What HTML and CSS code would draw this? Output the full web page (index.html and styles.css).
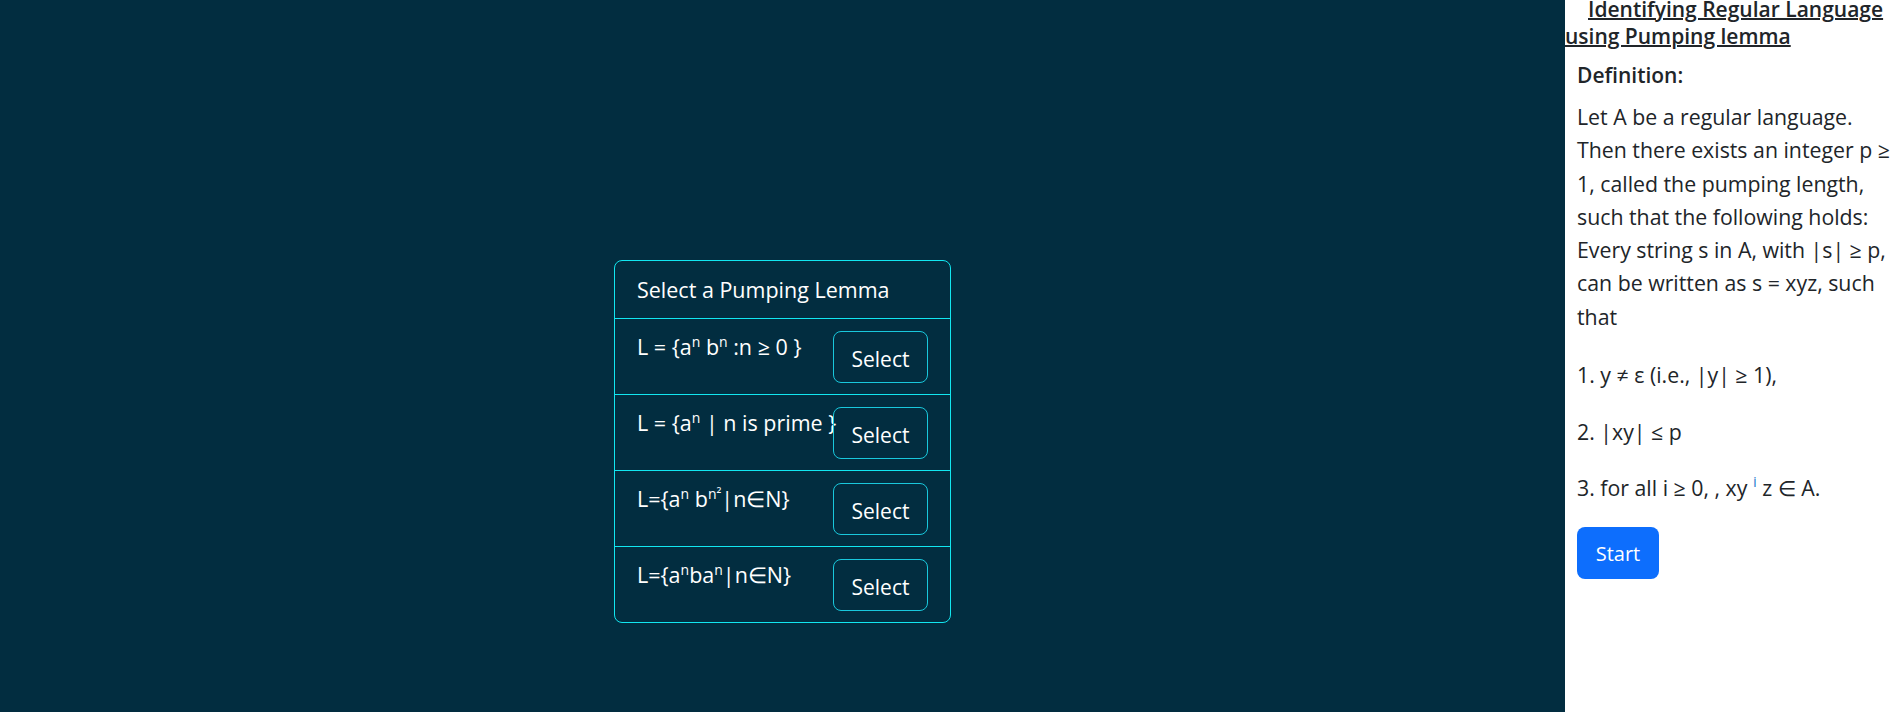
FILE: index.html
```html
<!DOCTYPE html>
<html lang="en">
<head>
<meta charset="utf-8">
<title>Pumping Lemma</title>
<link rel="stylesheet" href="styles.css">
</head>
<body>
<div class="layout">
  <main class="stage">
    <div class="card">
      <div class="card-header">Select a Pumping Lemma</div>
      <div class="row">
        <span class="lang">L = {a<sup>n</sup> b<sup>n</sup> :n ≥ 0 }</span>
        <button class="btn-select">Select</button>
      </div>
      <div class="row">
        <span class="lang">L = {a<sup>n</sup> | n is prime }</span>
        <button class="btn-select">Select</button>
      </div>
      <div class="row">
        <span class="lang">L={a<sup>n</sup> b<sup>n²</sup>|n∈N}</span>
        <button class="btn-select">Select</button>
      </div>
      <div class="row last">
        <span class="lang">L={a<sup>n</sup>ba<sup>n</sup>|n∈N}</span>
        <button class="btn-select">Select</button>
      </div>
    </div>
  </main>
  <aside class="sidebar">
    <h2 class="title"><a href="#">Identifying Regular Language using Pumping lemma</a></h2>
    <div class="content">
      <h3 class="def">Definition:</h3>
      <p class="para">Let A be a regular language. Then there exists an integer p ≥ 1, called the pumping length, such that the following holds: Every string s in A, with |s| ≥ p, can be written as s = xyz, such that</p>
      <p class="item first">1. y ≠ ε (i.e., |y| ≥ 1),</p>
      <p class="item second">2. |xy| ≤ p</p>
      <p class="item third">3. for all i ≥ 0, , xy <sup class="exp">i</sup> z ∈ A.</p>
      <button class="btn-start">Start</button>
    </div>
  </aside>
</div>
</body>
</html>
```
FILE: styles.css
```css
html, body {
  margin: 0;
  padding: 0;
  height: 100%;
  overflow: hidden;
}
body {
  font-family: "Open Sans", "Noto Sans", sans-serif;
  color: #212529;
}
.layout {
  display: flex;
  height: 712px;
}
.stage {
  flex: 1;
  background: #022d40;
  display: flex;
  justify-content: center;
  align-items: flex-start;
  padding-top: 260px;
}
.card {
  width: 335px;
  border: 1px solid #12e6f0;
  border-radius: 8px;
  color: #ffffff;
  font-size: 21.5px;
}
.card-header {
  height: 57px;
  padding: 0 22px;
  display: flex;
  align-items: center;
  border-bottom: 1px solid #12e6f0;
  line-height: 30px;
}
.row {
  display: flex;
  align-items: flex-start;
  height: 52px;
  padding: 12px 22px 11px 22px;
  border-bottom: 1px solid #12e6f0;
}
.row.last {
  border-bottom: none;
}
.lang {
  flex: 1;
  min-width: 0;
  white-space: nowrap;
  font-size: 21.5px;
  line-height: 28px;
  padding-top: 2px;
}
.lang sup {
  font-size: 14px;
  vertical-align: 8px;
  line-height: 0;
}
.btn-select {
  flex: 0 0 95px;
  height: 52px;
  background: transparent;
  border: 1px solid #19c8dc;
  border-radius: 8px;
  color: #ffffff;
  font-family: inherit;
  font-size: 21px;
  padding: 4px 0 0 0;
}
.sidebar {
  width: 327px;
  flex-shrink: 0;
  background: #ffffff;
  overflow: hidden;
}
.title {
  margin: -4px 0 0 0;
  font-size: 21px;
  font-weight: 600;
  line-height: 27px;
  text-indent: 23px;
}
.title a {
  color: #212529;
  text-decoration: underline;
  text-decoration-thickness: 1.5px;
}
.content {
  width: 324px;
  padding-left: 12px;
}
.def {
  margin: 10px 0 0 0;
  font-size: 21px;
  font-weight: 600;
  line-height: 30px;
}
.para {
  margin: 10px 0 0 0;
  font-size: 21.3px;
  line-height: 33.3px;
}
.item {
  margin: 0;
  font-size: 21.3px;
  line-height: 33px;
}
.item.first {
  margin-top: 25px;
}
.item.second {
  margin-top: 24px;
}
.item.third {
  margin-top: 23px;
}
.exp {
  color: #2f7fd0;
  font-size: 15px;
  line-height: 0;
  vertical-align: 9px;
}
.btn-start {
  margin-top: 23px;
  width: 82px;
  height: 52px;
  background: #0d6efd;
  border: none;
  border-radius: 8px;
  color: #ffffff;
  font-family: inherit;
  font-size: 20px;
  padding: 0;
}
```
